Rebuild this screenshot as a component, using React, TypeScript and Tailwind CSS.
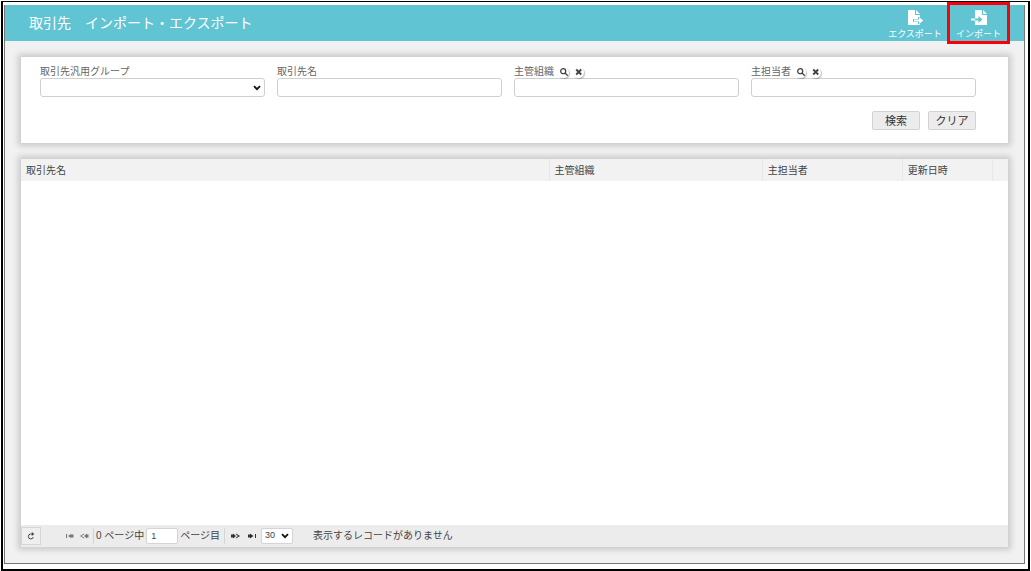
import { useState } from 'react'
import type { ReactNode } from 'react'

const COLUMNS = [
  { label: '取引先名', width: 'w-[53.5%]' },
  { label: '主管組織', width: 'w-[21.6%]' },
  { label: '主担当者', width: 'w-[14.2%]' },
  { label: '更新日時', width: 'w-[9.1%]' },
]

const INPUT = 'block w-full h-[19px] rounded-[3px] border border-[#cfcfcf] bg-white px-1 text-[10px] outline-none'
const PANEL = 'bg-white shadow-[0_0_6px_3px_rgba(0,0,0,0.16)]'

function ExportIcon() {
  return (
    <svg width="18" height="16" viewBox="0 0 18 16" aria-hidden="true">
      <path d="M2 0h7v5h5v2h-2v2H7v3h5v2h2v1H2z" fill="#fff" />
      <path d="M10 0l4 4h-4z" fill="#fff" />
      <path d="M8 9.500h5V7l4.300 3.500L13 14v-2.500H8z" fill="#fff" />
    </svg>
  )
}

function ImportIcon() {
  return (
    <svg width="18" height="16" viewBox="0 0 18 16" aria-hidden="true">
      <path d="M5 0h7v5h5v10H5z" fill="#fff" />
      <path d="M13 0l4 4h-4z" fill="#fff" />
      <path d="M1 8.500h4v2H1z" fill="#fff" />
      <path d="M5 8.500h3.500V6l4 3.500-4 3.500v-2.500H5z" fill="#61c4d3" />
    </svg>
  )
}

function Chevron() {
  return (
    <svg className="pointer-events-none absolute right-1 top-1/2 -translate-y-1/2" width="8" height="6" viewBox="0 0 8 6" aria-hidden="true">
      <path d="M1 1.200l3 3 3-3" fill="none" stroke="#111" strokeWidth="1.800" />
    </svg>
  )
}

function RoundButton({ label, children }: { label: string; children: ReactNode }) {
  return (
    <button type="button" aria-label={label} className="flex size-[11px] items-center justify-center rounded-full bg-white shadow-[1px_1px_1px_rgba(0,0,0,0.25)]">
      <svg width="8" height="8" viewBox="0 0 8 8" fill="none" stroke="#444" strokeWidth="1.300" aria-hidden="true">
        {children}
      </svg>
    </button>
  )
}

function Field({ id, label, lookup, children }: { id: string; label: string; lookup?: boolean; children: ReactNode }) {
  return (
    <div className="min-w-0 flex-1">
      <div className="flex h-3 items-center gap-1">
        <label htmlFor={id} className="text-[10px] leading-3 text-[#666]">{label}</label>
        {lookup && (
          <>
            <RoundButton label={`${label}を選択`}>
              <circle cx="3.200" cy="3.200" r="2.500" />
              <path d="M5 5l2.700 2.700" />
            </RoundButton>
            <RoundButton label={`${label}を消去`}>
              <path d="M1.200 1.500l5 5M6.200 1.500l-5 5" strokeWidth="1.900" />
            </RoundButton>
          </>
        )}
      </div>
      {children}
    </div>
  )
}

function PageButton({ label, disabled, d }: { label: string; disabled?: boolean; d: string }) {
  return (
    <button type="button" aria-label={label} disabled={disabled} className="text-[#333] disabled:text-[#777]">
      <svg width="9" height="6" viewBox="0 0 9 6" fill="currentColor" aria-hidden="true">
        <path d={d} />
      </svg>
    </button>
  )
}

export default function App() {
  const [group, setGroup] = useState('')
  const [name, setName] = useState('')
  const [org, setOrg] = useState('')
  const [person, setPerson] = useState('')
  const [page, setPage] = useState('1')
  const [size, setSize] = useState('30')

  const clear = () => {
    setGroup('')
    setName('')
    setOrg('')
    setPerson('')
  }

  return (
    <div className="flex min-h-screen bg-white px-px pt-px font-['Liberation_Sans','Noto_Sans_CJK_JP',sans-serif] text-[#444]">
      <div className="flex flex-1 border-2 border-t border-black pt-[3px] pr-[3px] pb-[5px] pl-px">
        <div className="flex min-w-0 flex-1 flex-col border border-t-0 border-[#777] bg-[#f1f1f1]">
          <header className="flex h-9 items-center justify-between bg-[#61c4d3] pr-[14px] pl-6 text-white">
            <h1 className="text-sm">取引先　インポート・エクスポート</h1>
            <div className="flex h-full items-center">
              <button type="button" className="flex w-16 flex-col items-center pt-1 text-[9px] leading-3">
                <ExportIcon />
                <span className="mt-0.5">エクスポート</span>
              </button>
              <button type="button" className="relative flex w-[63px] flex-col items-center pt-1 text-[9px] leading-3">
                <ImportIcon />
                <span className="mt-0.5">インポート</span>
                <span className="pointer-events-none absolute inset-x-0 -top-1 -bottom-1 border-3 border-[#fb0007]" />
              </button>
            </div>
          </header>

          <main className="flex flex-1 flex-col gap-4 p-4">
            <form className={`${PANEL} pt-[9px] pr-8 pb-[13px] pl-[19px]`} onSubmit={e => e.preventDefault()}>
              <div className="flex gap-3">
                <Field id="group" label="取引先汎用グループ">
                  <div className="relative">
                    <select id="group" value={group} onChange={e => setGroup(e.target.value)} className={`${INPUT} appearance-none`}>
                      <option value=""></option>
                    </select>
                    <Chevron />
                  </div>
                </Field>
                <Field id="name" label="取引先名">
                  <input id="name" value={name} onChange={e => setName(e.target.value)} className={INPUT} />
                </Field>
                <Field id="org" label="主管組織" lookup>
                  <input id="org" value={org} onChange={e => setOrg(e.target.value)} className={INPUT} />
                </Field>
                <Field id="person" label="主担当者" lookup>
                  <input id="person" value={person} onChange={e => setPerson(e.target.value)} className={INPUT} />
                </Field>
              </div>
              <div className="mt-[14px] flex justify-end gap-2 text-[11px] text-[#333]">
                <button type="submit" className="h-[19px] w-12 rounded-xs border border-[#d2d2d2] bg-[#ececec] leading-4">検索</button>
                <button type="button" onClick={clear} className="h-[19px] w-12 rounded-xs border border-[#d2d2d2] bg-[#ececec] leading-4">クリア</button>
              </div>
            </form>

            <section className={`${PANEL} flex flex-1 flex-col`}>
              <table className="w-full table-fixed text-[10px]">
                <thead className="bg-[#f2f2f2]">
                  <tr className="h-[22px]">
                    {COLUMNS.map(c => (
                      <th key={c.label} scope="col" className={`${c.width} border-r border-[#e8e8e8] px-[5px] text-left font-normal`}>
                        {c.label}
                      </th>
                    ))}
                    <td />
                  </tr>
                </thead>
                <tbody />
              </table>

              <footer className="mt-auto flex h-[22px] items-center bg-[#ececec] text-[10px]">
                <button type="button" aria-label="更新" className="flex h-[18px] w-5 items-center justify-center border border-[#d6d6d6] bg-[#efefef]">
                  <svg width="8" height="8" viewBox="0 0 8 8" fill="none" stroke="#444" aria-hidden="true">
                    <path d="M5 2H3.500a2.500 2.500 0 1 0 2.800 3" />
                    <path d="M4.800 0l2.500 2-2.500 2z" fill="#444" stroke="none" />
                  </svg>
                </button>
                <div className="ml-6 flex items-center gap-1.5">
                  <PageButton label="最初のページ" disabled d="M1 1h1v4H1zM6 1v4L3 3zM6 1.500h2.500v3H6z" />
                  <PageButton label="前のページ" disabled d="M4 .5v1L1.500 3 4 4.500v1L0 3zM7 .5v5L4 3zM7 1.500h1.500v3H7z" />
                </div>
                <label htmlFor="page" className="ml-1 border-l border-[#d4d4d4] pl-0.5 leading-4">0 ページ中</label>
                <input id="page" value={page} onChange={e => setPage(e.target.value)} className="ml-0.5 h-4 w-8 rounded-xs border border-[#d4d4d4] bg-white px-1 text-[9px] outline-none" />
                <span className="ml-0.5 border-r border-[#d4d4d4] pr-1 leading-4">ページ目</span>
                <div className="ml-1.5 flex items-center gap-2">
                  <PageButton label="次のページ" d="M0 1.500h2v-1L5 3 2 5.500v-1H0zM5 .5v1L7 3 5 4.500v1L9 3z" />
                  <PageButton label="最後のページ" d="M0 1.500h2v-1L5.500 3 2 5.500v-1H0zM7 1h1v4H7z" />
                </div>
                <div className="relative ml-1">
                  <select aria-label="表示件数" value={size} onChange={e => setSize(e.target.value)} className="block h-4 w-8 appearance-none rounded-xs border border-[#d4d4d4] bg-white pl-[3px] text-[9px] outline-none">
                    <option>30</option>
                    <option>50</option>
                    <option>100</option>
                  </select>
                  <Chevron />
                </div>
                <p className="ml-5 leading-4">表示するレコードがありません</p>
              </footer>
            </section>
          </main>
        </div>
      </div>
    </div>
  )
}
